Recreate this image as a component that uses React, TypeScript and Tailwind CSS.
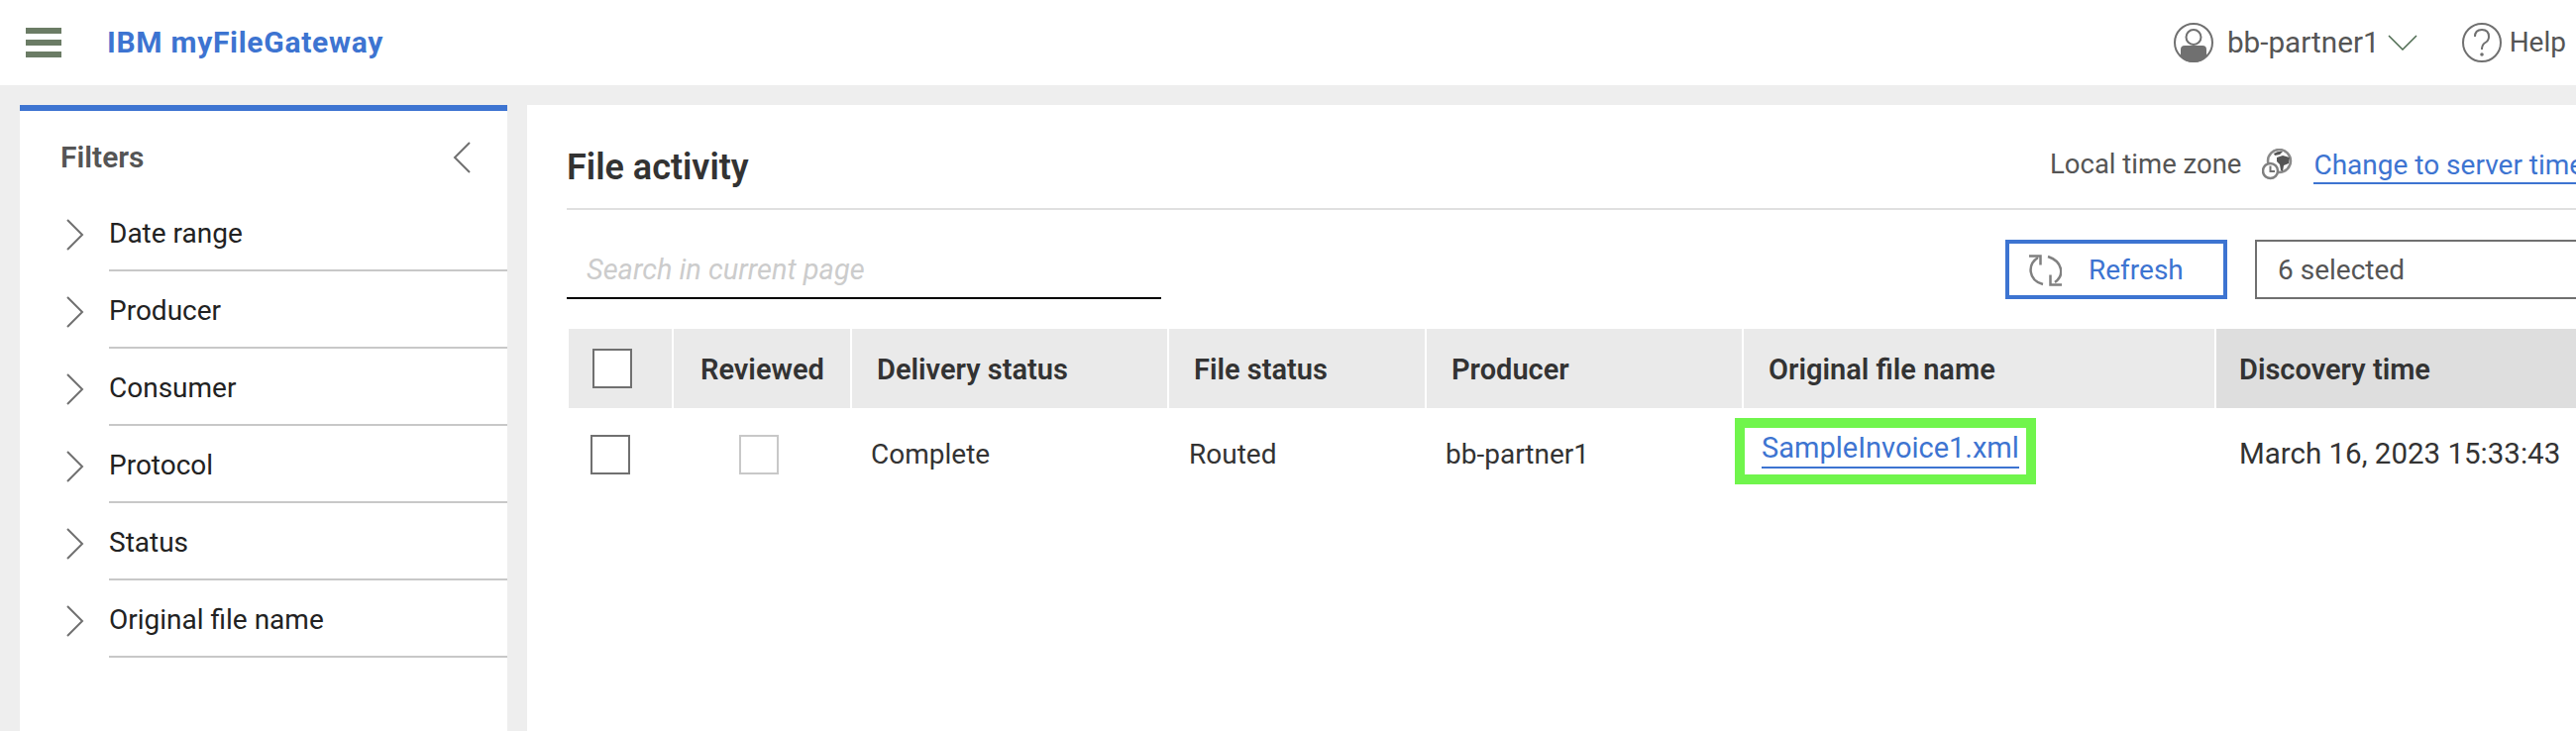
const filters = ["Date range", "Producer", "Consumer", "Protocol", "Status", "Original file name"];

const columns = "grid-cols-[104px_180px_320px_260px_320px_477px_1fr]";

const Checkbox = ({ cx }: { cx: string }) => (
  <div className={`w-10 h-10 border-2 bg-white ${cx}`} />
);

const Arrow = ({ left }: { left?: boolean }) => (
  <svg viewBox="0 0 18 32" className="w-[18px] h-8 shrink-0" fill="none" stroke="#707070" strokeWidth="2">
    <path d={left ? "M17 1 2 16l15 15" : "M1 1l15 15L1 31"} />
  </svg>
);

const UserIcon = () => (
  <svg viewBox="0 0 40 40" className="w-10 h-10 shrink-0">
    <circle cx="20" cy="20" r="19" fill="none" stroke="#707070" strokeWidth="2" />
    <circle cx="20" cy="14.5" r="7.5" fill="none" stroke="#707070" strokeWidth="2" />
    <path d="M7 34v-7q0-4 4-4h18q4 0 4 4v7q-5 6-13 6T7 34Z" fill="#707070" />
  </svg>
);

const HelpIcon = () => (
  <svg viewBox="0 0 40 40" className="w-10 h-10 shrink-0">
    <circle cx="20" cy="20" r="19" fill="none" stroke="#707070" strokeWidth="2" />
    <path d="M13 14q0-7 7-7t7 7q0 4-3.500 6T20 27" fill="none" stroke="#707070" strokeWidth="2" />
    <circle cx="20" cy="32" r="1.800" fill="#707070" />
  </svg>
);

const GlobeIcon = () => (
  <svg viewBox="0 0 32 32" className="w-8 h-8 shrink-0">
    <circle cx="17.500" cy="12.500" r="11.500" fill="none" stroke="#8a8a8a" strokeWidth="2.500" />
    <path d="M12 5q5-3 9-2l-3 3-5 1ZM15 9l6-2 7 2-1 6-5 2-1 6-2-1-1-6-3-3Z" fill="#555" />
    <circle cx="8.500" cy="22.500" r="7.500" fill="#fff" stroke="#808080" strokeWidth="2.500" />
    <path d="M8.500 17.500v5.500h4.500" fill="none" stroke="#707070" strokeWidth="2" />
  </svg>
);

const RefreshIcon = () => (
  <svg viewBox="0 0 33 32" className="w-[33px] h-8 shrink-0" fill="none" stroke="#808080" strokeWidth="2.500">
    <path d="M0 1.500h11.500v9" />
    <path d="M9 3C-2 10-1 26 14 30" />
    <path d="M19 2c15 5 17 19 7 26" />
    <path d="M33 30.500H21.500v-10" />
  </svg>
);

export default function App() {
  return (
    <div className="w-[2600px] h-[738px] overflow-hidden bg-[#eeeeee] font-['Roboto',sans-serif] text-[28px] leading-none text-[#333]">
      <header className="h-[86px] bg-white flex items-center pl-[26px] pr-[10px]">
        <div className="w-9 flex flex-col gap-1.5">
          <div className="h-1.5 bg-[#6b7c65]" />
          <div className="h-1.5 bg-[#6b7c65]" />
          <div className="h-1.5 bg-[#6b7c65]" />
        </div>
        <span className="ml-[46px] font-bold text-[30px] tracking-[0.7px] text-[#3d74d1]">IBM myFileGateway</span>
        <div className="ml-auto flex items-center text-[#555]">
          <UserIcon />
          <span className="ml-[14px] text-[29.7px]">bb-partner1</span>
          <svg viewBox="0 0 30 16" className="ml-2 w-[30px] h-4" fill="none" stroke="#4d6b50" strokeWidth="1.500">
            <path d="M1 1l14 14L29 1" />
          </svg>
          <div className="ml-[45px]"><HelpIcon /></div>
          <span className="ml-2">Help</span>
        </div>
      </header>

      <div className="flex pt-5 pl-5 h-[652px]">
        <aside className="w-[492px] shrink-0 h-full bg-white border-t-[6px] border-[#3d74d1]">
          <div className="h-[84px] pt-[31px] pl-[41px] pr-[37px]">
            <div className="h-8 flex items-center justify-between text-[30px] text-[#555] font-semibold">
              <span>Filters</span>
              <Arrow left />
            </div>
          </div>
          {filters.map((name) => (
            <div key={name} className="flex h-[78px] text-[#222]">
              <div className="w-[90px] pl-[47px] pt-[3px] flex items-center">
                <Arrow />
              </div>
              <div className="flex-1 pt-1 flex items-center border-b-2 border-[#c8c8c8]">{name}</div>
            </div>
          ))}
        </aside>

        <main className="ml-5 flex-1 min-w-0 bg-white pl-10">
          <div className="h-[106px] flex items-center border-b-2 border-[#e0e0e0] pt-4">
            <h1 className="w-[1497px] shrink-0 mt-[6px] text-[36px] font-semibold">File activity</h1>
            <div className="shrink-0 flex items-center text-[#555]">
              <span className="text-[27.5px]">Local time zone</span>
              <div className="ml-[21px]"><GlobeIcon /></div>
              <a className="ml-[20px] mt-[6px] pb-[3px] border-b-2 border-[#3d74d1] text-[#3d74d1] whitespace-nowrap">Change to server time</a>
            </div>
          </div>

          <div className="flex items-start mt-[30px]">
            <div className="w-[600px] shrink-0 h-[60px] border-b-2 border-black flex items-center pl-5 pt-[2px] text-[29px] text-[#cccccc] italic">
              Search in current page
            </div>
            <button className="ml-[852px] w-[224px] shrink-0 h-[60px] border-4 border-[#3d74d1] flex items-center pl-5 pt-[2px] text-[#3d74d1]">
              <RefreshIcon />
              <span className="ml-[27px]">Refresh</span>
            </button>
            <div className="ml-7 w-[400px] h-[60px] border-2 border-[#707070] flex items-center pl-[21px] pt-[2px] text-[#555] shrink-0">
              6 selected
            </div>
          </div>

          <div className={`ml-[2px] mt-[30px] grid ${columns} h-20 text-[29px] font-semibold`}>
            <div className="bg-[#eaeaea] flex items-center pl-6"><Checkbox cx="border-[#707070]" /></div>
            <div className="bg-[#eaeaea] border-l-2 border-white flex items-center pl-[27px] pt-[2px]">Reviewed</div>
            <div className="bg-[#eaeaea] border-l-2 border-white flex items-center pl-[25px] pt-[2px]">Delivery status</div>
            <div className="bg-[#eaeaea] border-l-2 border-white flex items-center pl-[25px] pt-[2px]">File status</div>
            <div className="bg-[#eaeaea] border-l-2 border-white flex items-center pl-[25px] pt-[2px]">Producer</div>
            <div className="bg-[#eaeaea] border-l-2 border-white flex items-center pl-[25px] pt-[2px]">Original file name</div>
            <div className="bg-[#dedede] border-l-2 border-white flex items-center pl-[23px] pt-[2px]">Discovery time</div>
          </div>

          <div className={`ml-[2px] grid ${columns} h-[94px] items-center`}>
            <div className="pl-[22px]"><Checkbox cx="border-[#707070]" /></div>
            <div className="pl-[68px]"><Checkbox cx="border-[#c8c8c8]" /></div>
            <div className="pl-[21px]">Complete</div>
            <div className="pl-[22px]">Routed</div>
            <div className="pl-[21px]">bb-partner1</div>
            <div className="-ml-[7px] mb-[7px]">
              <div className="w-[304px] h-[67px] border-[10px] border-[#70f54c] flex items-center pl-[17px] text-[29px] text-[#3d74d1]">
                <a className="border-b-2 border-[#3d74d1] pb-1">SampleInvoice1.xml</a>
              </div>
            </div>
            <div className="pl-[25px] text-[29.500px] whitespace-nowrap">March 16, 2023 15:33:43</div>
          </div>
        </main>
      </div>
    </div>
  );
}
